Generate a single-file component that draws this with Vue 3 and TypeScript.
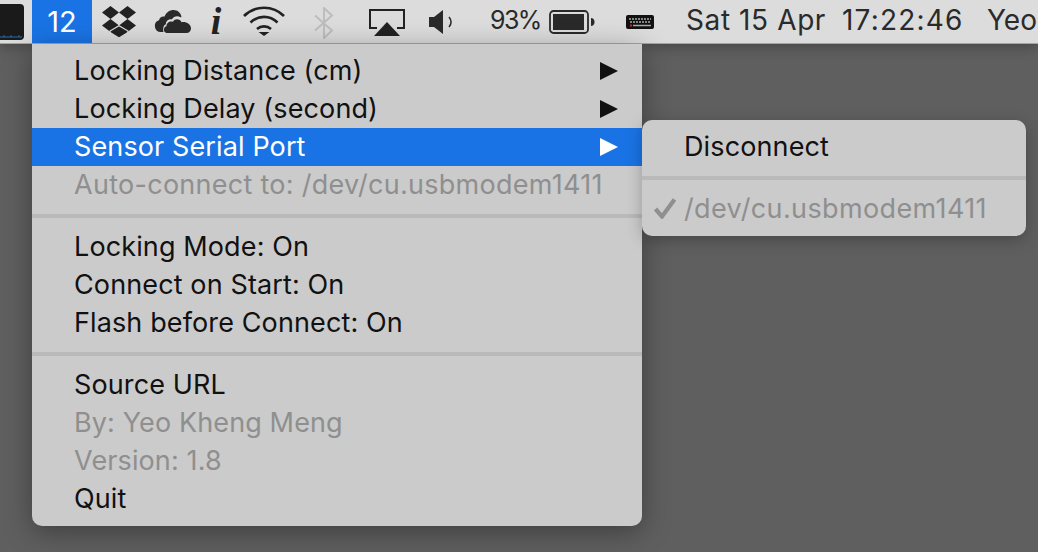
<script setup lang="ts">
interface Row { label: string; disabled?: boolean; arrow?: boolean; active?: boolean; path?: boolean }
const groups: Row[][] = [
  [
    { label: 'Locking Distance (cm)', arrow: true },
    { label: 'Locking Delay (second)', arrow: true },
    { label: 'Sensor Serial Port', arrow: true, active: true },
    { label: 'Auto-connect to: /dev/cu.usbmodem1411', disabled: true, path: true },
  ],
  [
    { label: 'Locking Mode: On' },
    { label: 'Connect on Start: On' },
    { label: 'Flash before Connect: On' },
  ],
  [
    { label: 'Source URL' },
    { label: 'By: Yeo Kheng Meng', disabled: true },
    { label: 'Version: 1.8', disabled: true },
    { label: 'Quit' },
  ],
]
</script>

<template>
  <div class="screen">
    <header class="bar">
      <svg class="app" width="24" height="36" viewBox="0 0 24 36">
        <path d="M0 0h20a4 4 0 0 1 4 4v28a4 4 0 0 1-4 4H0z" fill="#1a1a1a" />
        <path d="M0 33h22M4 31v2M11 31v2M19 31v2" stroke="#1c6fb5" fill="none" />
      </svg>
      <div class="count">12</div>
      <svg class="dropbox" width="34" height="32" viewBox="0 0 34 32" fill="#222">
        <path d="M8.5 0 17 6.500 8.500 13 0 6.500zM25.500 0 34 6.500 25.500 13 17 6.500zM8.500 13 17 19.500 8.500 26 0 19.500zM25.500 13 34 19.500 25.500 26 17 19.500z" />
        <path d="M8 25 17 19.800l9 5.200-.5 1.800L17 32l-8.500-5.200z" fill="#222" stroke="#dcdcdc" stroke-width="1.200" />
      </svg>
      <svg class="cloud" width="37" height="23" viewBox="0 0 37 23" fill="#2a2a2a">
        <path d="M7 22a6 6 0 0 1-2-11.700C5.500 7 8 6 10.500 6.500 12.500 2 16 0 19.500 0c4 0 7.500 2.800 8 7l-1 .3c-2.500-2-6.800-1.500-8.500 2-3-.8-6.500 1.500-6 5-2 .5-3.500 3.500-2.500 7.700z" />
        <path d="M13 23c-3.500 0-4.500-5.500-.5-7 0-3.500 3.500-5.500 6.500-4.200 1.800-3.300 6.800-3.300 8.500.4 4-1 9.500 1.500 9.500 6.300 0 2.700-2 4.500-4.500 4.500z" />
      </svg>
      <span class="info">i</span>
      <svg class="wifi" width="42" height="30" viewBox="0 0 42 30" fill="none" stroke="#222" stroke-width="2.600">
        <path d="M1 10C12 -1 30 -1 41 10" />
        <path d="M7.500 16.500C15 9 27 9 34.500 16.500" />
        <path d="M14 23C18 19.500 24 19.500 28 23" />
        <path d="M15.500 26h11L21 30z" fill="#222" stroke="none" />
      </svg>
      <svg class="bt" width="20" height="32" viewBox="0 0 20 32" fill="none" stroke="#bdbdbd" stroke-width="2">
        <path d="M1 8.500 18 23.500 10 31V1l8 7.500L1 23.500" />
      </svg>
      <svg class="air" width="36" height="27" viewBox="0 0 36 27">
        <path d="M8 19H1V1h34v18h-7" fill="none" stroke="#222" stroke-width="2" />
        <path d="M18 13 31 27H5z" fill="#222" />
      </svg>
      <svg class="vol" width="25" height="24" viewBox="0 0 25 24">
        <path d="M0 7h5l9-7v24l-9-7H0z" fill="#2a2a2a" />
        <path d="M20 7c2.500 3 2.500 7 0 10" fill="none" stroke="#2a2a2a" stroke-width="1.500" />
      </svg>
      <span class="txt pct">93%</span>
      <svg class="batt" width="46" height="24" viewBox="0 0 46 24">
        <rect x="1" y="1" width="38" height="22" rx="3.500" fill="none" stroke="#2a2a2a" stroke-width="1.800" />
        <rect x="4" y="4" width="31" height="16" fill="#2a2a2a" />
        <path d="M42 8c2 0 3.500 1.500 3.500 4s-1.500 4-3.500 4z" fill="#2a2a2a" />
      </svg>
      <svg class="keys" width="28" height="14" viewBox="0 0 28 14">
        <rect width="28" height="14" rx="2" fill="#111" />
        <path d="M3 4h22M4 7h20" stroke="#aaa" stroke-width="1.500" stroke-dasharray="2 1" fill="none" />
        <path d="M7 10.500h18" stroke="#aaa" stroke-width="1.500" fill="none" />
        <rect x="4" y="9.500" width="2" height="2" fill="#d22" />
      </svg>
      <span class="txt date">Sat 15 Apr</span>
      <span class="txt time">17:22:46</span>
      <span class="txt user">Yeo</span>
    </header>

    <nav class="menu">
      <template v-for="(group, g) in groups" :key="g">
        <div v-if="g > 0" class="sep"></div>
        <div
          v-for="row in group"
          :key="row.label"
          class="row"
          :class="{ disabled: row.disabled, active: row.active, path: row.path }"
        >
          <span class="label">{{ row.label }}</span>
          <i v-if="row.arrow" class="arrow"></i>
        </div>
      </template>
    </nav>

    <nav class="menu sub">
      <div class="row"><span class="label">Disconnect</span></div>
      <div class="sep"></div>
      <div class="row disabled path-sub">
        <svg class="check" width="24" height="22" viewBox="0 0 24 22">
          <path d="M2.500 12 9 19.500 21.500 2.500" fill="none" stroke="#8f8f8f" stroke-width="4.200" />
        </svg>
        <span class="label">/dev/cu.usbmodem1411</span>
      </div>
    </nav>
  </div>
</template>

<style scoped>
.screen {
  position: relative;
  width: 1038px;
  height: 552px;
  overflow: hidden;
  background: #5f5f5f;
  font-family: Inter, "Noto Sans", sans-serif;
}
.bar {
  display: flex;
  align-items: center;
  height: 43px;
  background: #dcdcdc;
  border-bottom: 1px solid #a4a4a4;
  box-shadow: 0 2px 14px rgba(0, 0, 0, 0.3);
  white-space: nowrap;
  color: #2a2a2a;
}
.bar > * { flex: none; }
.count {
  width: 60px;
  height: 43px;
  margin-left: 8px;
  background: #1a73e4;
  color: #fff;
  font-size: 29px;
  line-height: 43px;
  text-align: center;
}
.dropbox { margin-left: 10px; }
.cloud { margin-left: 18px; margin-top: -1px; }
.info {
  width: 14px;
  margin-left: 18px;
  font: italic 700 38px/43px "Liberation Serif", serif;
  text-align: center;
  color: #222;
}
.wifi { margin-left: 20px; margin-top: -1px; }
.bt { margin-left: 29px; margin-top: 2px; }
.air { margin-left: 35px; margin-top: 1px; }
.vol { margin-left: 24px; }
.txt { font-size: 28px; line-height: 41px; height: 43px; }
.pct { width: 49px; margin-left: 36px; font-size: 25px; letter-spacing: -1.600px; }
.batt { margin-left: 10px; }
.keys { margin-left: 31px; }
.date { margin-left: 32px; width: 156px; letter-spacing: 0.600px; }
.time { width: 145px; letter-spacing: 1.200px; }

.menu {
  position: absolute;
  left: 32px;
  top: 44px;
  width: 610px;
  padding: 8px 0;
  background: #cbcbcb;
  border-radius: 0 0 10px 10px;
  box-shadow: 0 6px 28px rgba(0, 0, 0, 0.35);
  font-size: 27px;
  letter-spacing: 0.120px;
  color: #111;
}
.sub {
  left: 642px;
  top: 120px;
  width: 384px;
  border-radius: 10px;
  box-shadow: 0 4px 16px rgba(0, 0, 0, 0.25);
}
.row {
  position: relative;
  display: flex;
  align-items: center;
  height: 38px;
  padding-left: 42px;
  white-space: nowrap;
}
.label { position: relative; top: -1px; }
.disabled { color: #8f8f8f; }
.path { letter-spacing: 0.280px; }
.path-sub { letter-spacing: 0.380px; }
.active { background: #1a73e4; color: #fff; }
.arrow {
  position: absolute;
  right: 24px;
  top: 10px;
  border-left: 18px solid currentColor;
  border-top: 9px solid transparent;
  border-bottom: 9px solid transparent;
}
.sep {
  height: 4px;
  margin: 10px 0;
  background: #b9b9b9;
}
.check { position: absolute; left: 11px; top: 7px; }
</style>

<style>
html, body { margin: 0; background: #5f5f5f; }
</style>
